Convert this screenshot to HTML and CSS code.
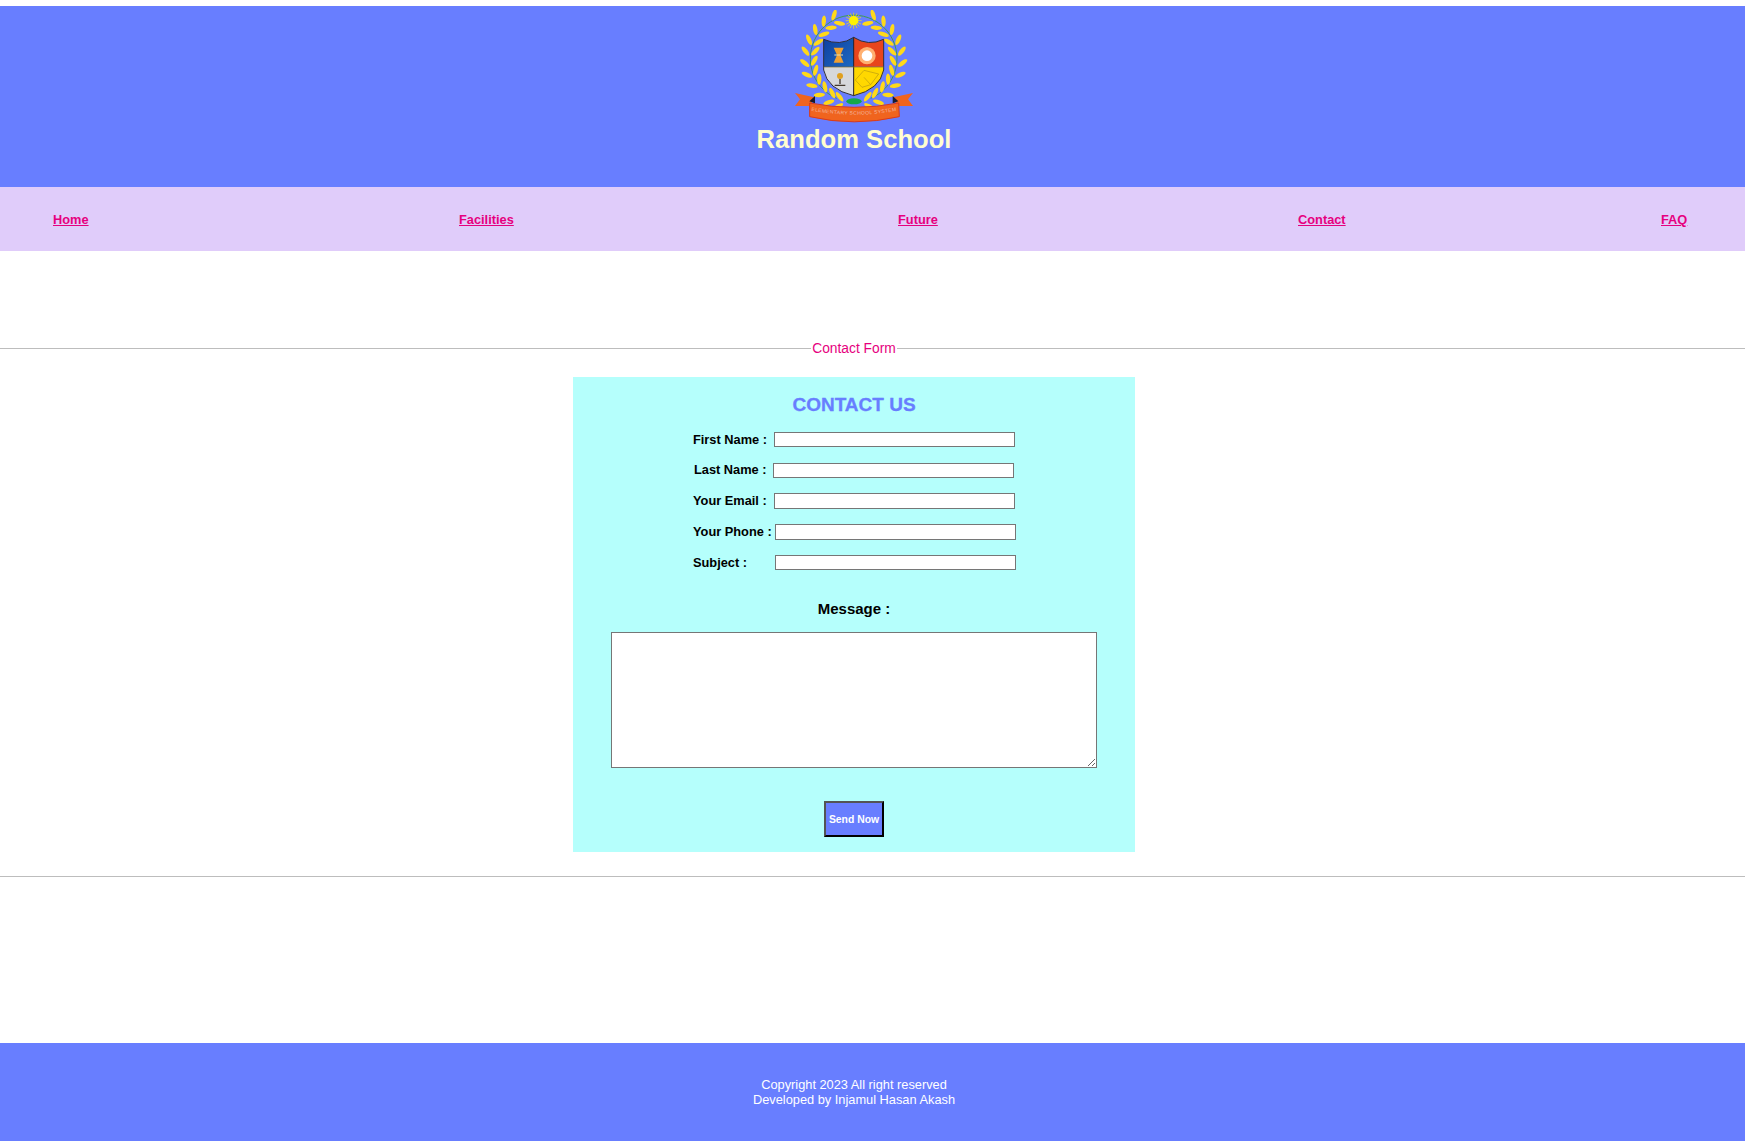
FILE: index.html
```html
<!DOCTYPE html>
<html lang="en">
<head>
<meta charset="utf-8">
<title>Random School</title>
<link rel="stylesheet" href="styles.css">
</head>
<body>
<header class="site-header">
  <svg class="logo" viewBox="162 30 360 342" width="120" height="114" aria-hidden="true">
    <defs>
      <g id="pair">
        <ellipse cx="337" cy="33" rx="17" ry="6.5" transform="rotate(-50 337 33)" fill="#ffd91a"/>
        <ellipse cx="343" cy="62" rx="17" ry="6.5" transform="rotate(32 343 62)" fill="#ffd91a"/>
      </g>
      <g id="half">
        <use href="#pair" transform="rotate(-22 341 180)"/>
        <use href="#pair" transform="rotate(-36 341 180)"/>
        <use href="#pair" transform="rotate(-50 341 180)"/>
        <use href="#pair" transform="rotate(-64 341 180)"/>
        <use href="#pair" transform="rotate(-78 341 180)"/>
        <use href="#pair" transform="rotate(-92 341 180)"/>
        <use href="#pair" transform="rotate(-106 341 180)"/>
        <use href="#pair" transform="rotate(-120 341 180)"/>
        <use href="#pair" transform="rotate(-134 341 180)"/>
        <use href="#pair" transform="rotate(-148 341 180)"/>
        <use href="#pair" transform="rotate(-160 341 180)"/>
      </g>
      <linearGradient id="blue-field" x1="0" y1="0" x2="1" y2="1">
        <stop offset="0" stop-color="#0f3f9e"/>
        <stop offset="1" stop-color="#1d6cc4"/>
      </linearGradient>
    </defs>
    <path d="M290 295A130 130 0 1 1 392 295" fill="none" stroke="#3f9c52" stroke-width="3"/>
    <use href="#half"/>
    <use href="#half" transform="matrix(-1 0 0 1 682 0)"/>
    <ellipse cx="342" cy="304" rx="23" ry="9" fill="#14a84a"/>
    <path class="sun-rays" d="M341 38V86M317 62H365M324 45L358 79M358 45L324 79M331 40L351 84M351 40L331 84M319 52L363 72M319 72L363 52"/>
    <circle cx="341" cy="62" r="14" fill="#fff200"/>
    <path d="M251 118Q300 140 341 112V210H251Z" fill="url(#blue-field)"/>
    <path d="M341 112Q385 140 431 118L431 200H341Z" fill="#e8451c"/>
    <path d="M251 201H341V287Q262 268 251 210Z" fill="#d6d8dc"/>
    <path d="M341 201H431V210Q420 268 341 287Z" fill="#ffd800"/>
    <path d="M251 118Q300 140 341 112Q385 140 431 118V210Q420 268 341 287Q262 268 251 210Z" fill="none" stroke="#30303a" stroke-width="3"/>
    <path d="M341 112V287" stroke="#20202a" stroke-width="3"/>
    <path d="M251 201H431" stroke="#8a6a20" stroke-width="2"/>
    <path d="M281 143H311L301 165L311 188H281L291 165Z" fill="#f0a030"/>
    <path d="M283 165H309" stroke="#e8e0b0" stroke-width="3"/>
    <circle cx="381" cy="167" r="26" fill="#ffb070"/>
    <circle cx="381" cy="167" r="16" fill="#fff"/>
    <circle cx="300" cy="228" r="9" fill="#e0a020"/>
    <path d="M300 237V252M284 256H316" stroke="#443a30" stroke-width="4"/>
    <path d="M346 240L372 211L416 222L392 254L366 262Z" fill="none" stroke="#b89a10" stroke-width="2"/>
    <path d="M372 232L392 254" stroke="#b89a10" stroke-width="2"/>
    <path d="M222 292L165 279L180 298L165 318L212 318Z" fill="#f0641e"/>
    <path d="M460 292L519 279L504 298L519 318L472 318Z" fill="#f0641e"/>
    <path d="M208 304L225 288V310Z" fill="#1a1a2a"/>
    <path d="M475 304L458 288V310Z" fill="#1a1a2a"/>
    <path d="M209 309Q342 335 476 309L478 350Q342 381 209 350Z" fill="#f0641e" stroke="#d83a1c" stroke-width="3"/>
    <path id="motto-curve" d="M214 332Q342 356 472 332" fill="none"/>
    <text class="logo-motto"><textPath href="#motto-curve">ELEMENTARY SCHOOL SYSTEM</textPath></text>
  </svg>
  <h1 class="school-name">Random School</h1>
</header>

<nav class="main-nav">
  <a href="#">Home</a>
  <a href="#">Facilities</a>
  <a href="#">Future</a>
  <a href="#">Contact</a>
  <a href="#">FAQ</a>
</nav>

<main class="content">
  <fieldset class="contact-fieldset">
    <legend class="contact-legend">Contact Form</legend>
    <form class="contact-card">
      <h3 class="card-title">CONTACT US</h3>
      <div class="fields">
        <div class="row row-first"><label class="label">First Name :</label><input class="text-input" type="text"></div>
        <div class="row row-last"><label class="label">Last Name :</label><input class="text-input" type="text"></div>
        <div class="row row-email"><label class="label">Your Email :</label><input class="text-input tall" type="text"></div>
        <div class="row row-phone"><label class="label">Your Phone :</label><input class="text-input tall" type="text"></div>
        <div class="row row-subject"><label class="label">Subject :</label><input class="text-input" type="text"></div>
      </div>
      <p class="message-label">Message :</p>
      <textarea class="message-box"></textarea>
      <button class="send-btn" type="button">Send Now</button>
    </form>
  </fieldset>
</main>

<footer class="site-footer">
  <p class="footer-text">Copyright 2023 All right reserved<br>Developed by Injamul Hasan Akash</p>
</footer>
</body>
</html>
```

FILE: styles.css
```css
* {
  box-sizing: border-box;
}

body {
  margin: 6px 0 7px;
  font-family: "Liberation Sans", Arial, sans-serif;
  background: #fff;
}

.site-header {
  height: 181px;
  background: #687eff;
  display: flex;
  flex-direction: column;
  align-items: center;
  padding: 4px 37px 0 0;
}

.logo {
  display: block;
  flex: none;
}

.sun-rays {
  stroke: #ffe600;
  stroke-width: 2;
  fill: none;
}

.logo-motto {
  font-size: 15px;
  letter-spacing: 1px;
  fill: #f3b8a0;
  font-family: "Liberation Sans", sans-serif;
}

.school-name {
  margin: 0;
  font-size: 25.6px;
  line-height: 30px;
  font-weight: 700;
  color: #fffdd0;
}

.main-nav {
  height: 64px;
  background: #e0ccfa;
  display: grid;
  grid-template-columns: 406px 439px 400px 363px auto;
  align-items: center;
  padding-left: 53px;
  font-size: 12.8px;
  font-weight: 700;
}

.main-nav a {
  color: #e6007e;
}

.content {
  padding-top: 88px;
  height: 792px;
}

.contact-fieldset {
  margin: 0;
  padding: 20px 37px 24px 0;
  border: 0;
  border-top: 1px solid #bdbdbd;
  border-bottom: 1px solid #bdbdbd;
  min-width: 0;
}

.contact-legend {
  margin: 0 auto;
  padding: 2px 1px 0;
  font-size: 13.8px;
  line-height: 16px;
  color: #e6007e;
}

.contact-card {
  width: 562px;
  height: 475px;
  margin: 0 auto;
  padding-top: 17px;
  background: #b5fffc;
  display: flex;
  flex-direction: column;
  align-items: center;
}

.card-title {
  margin: 0;
  font-size: 19px;
  line-height: 22px;
  font-weight: 700;
  color: #687eff;
  -webkit-text-stroke: 0.3px #687eff;
}

.fields {
  width: 100%;
  padding-left: 120px;
  margin-top: 16px;
  display: flex;
  flex-direction: column;
}

.row {
  display: flex;
  align-items: center;
  font-size: 12.8px;
  font-weight: 700;
  margin-bottom: 15px;
}

.row-first {
  margin-bottom: 16px;
}

.row-subject {
  margin-bottom: 0;
}

.label {
  white-space: nowrap;
  color: #000;
}

.row-last .label,
.row-email .label,
.row-phone .label {
  margin-top: -2px;
}

.row-first .label,
.row-email .label {
  width: 81px;
}

.row-last .label {
  width: 80px;
  padding-left: 1px;
}

.row-phone .label,
.row-subject .label {
  width: 82px;
}

.text-input {
  width: 241px;
  height: 15px;
  padding: 0 2px;
  border: 1px solid #767676;
  background: #fff;
}

.text-input.tall {
  height: 16px;
}

.message-label {
  margin: 30px 0 0;
  font-size: 15px;
  line-height: 18px;
  font-weight: 700;
  color: #000;
}

.message-box {
  display: block;
  width: 486px;
  height: 136px;
  margin-top: 14px;
  padding: 2px;
  border: 1px solid #767676;
  background: #fff;
}

.send-btn {
  width: 60px;
  height: 36px;
  margin-top: 33px;
  padding: 0;
  border: 2px outset #000;
  background: #687eff;
  color: #fff;
  font-family: "Liberation Sans", Arial, sans-serif;
  font-size: 10.4px;
  font-weight: 700;
}

.site-footer {
  height: 98px;
  background: #687eff;
  display: flex;
  align-items: center;
  justify-content: center;
  padding-right: 37px;
}

.footer-text {
  margin: 0;
  font-size: 12.8px;
  line-height: 15px;
  color: #fff;
  text-align: center;
}
```
